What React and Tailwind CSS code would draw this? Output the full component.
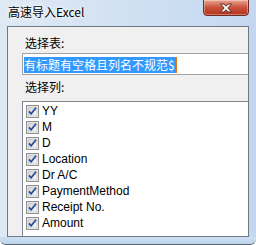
import React from 'react';

const columns = ['YY', 'M', 'D', 'Location', 'Dr A/C', 'PaymentMethod', 'Receipt No.', 'Amount'];

const CheckBox = () => (
  <svg width="13" height="13" viewBox="0 0 13 13" className="shrink-0">
    <defs>
      <linearGradient id="cbfill" x1="0" y1="0" x2="1" y2="1">
        <stop offset="0" stopColor="#d4d4d4" />
        <stop offset="1" stopColor="#f7f7f7" />
      </linearGradient>
    </defs>
    <rect x="0.5" y="0.5" width="12" height="12" fill="#f4f4f4" stroke="#8e8f8f" />
    <rect x="2" y="2" width="9" height="9" fill="url(#cbfill)" stroke="#b5b5b5" strokeWidth="0.6" />
    <path d="M3 6.3 L5.2 8.8 L10 2.8" fill="none" stroke="#2c4b9a" strokeWidth="1.8" strokeLinejoin="round" />
  </svg>
);

const CloseButton = () => (
  <div className="w-[46px] h-[17px] -mt-px rounded-b-[4px] border border-[#6e2a1f] bg-gradient-to-b from-[#e8a493] via-[#c9503b] to-[#b5321c] flex items-center justify-center shadow-[inset_0_0_0_1px_rgba(255,255,255,0.35)]">
    <svg width="14" height="10" viewBox="0 0 14 10">
      <path
        d="M1.5 1 H5 L7 3.3 L9 1 H12.5 L8.8 5 L12.5 9 H9 L7 6.7 L5 9 H1.5 L5.2 5 Z"
        fill="#ffffff"
        stroke="#5a2a22"
        strokeWidth="1"
        strokeLinejoin="round"
      />
    </svg>
  </div>
);

export default function App() {
  return (
    <div className="w-[256px] h-[245px] overflow-hidden bg-gradient-to-r from-[#dfe9f5] to-[#c3d8f0] rounded-b-[6px] border-b border-[#5a6470] flex flex-col">
      <div className="h-[26px] flex items-start justify-between pr-[7px] shrink-0">
        <span className="pl-[8px] pt-[5px] text-[12px] leading-[14px] text-black font-['Noto_Sans_CJK_SC',sans-serif] [text-shadow:0_0_6px_#ffffff,0_0_3px_#ffffff]">
          高速导入Excel
        </span>
        <CloseButton />
      </div>
      <div className="mx-[7px] h-[211px] shrink-0 border border-[#6f7884] bg-[#f0f0f0] flex flex-col overflow-hidden">
        <div className="mt-[9px] h-[14px] pl-[17px] text-[12px] leading-[14px] text-black font-['Noto_Sans_CJK_SC',sans-serif]">
          选择表:
        </div>
        <div className="mt-[3px] ml-[14px] h-[22px] shrink-0 bg-white border-t border-l border-b border-[#a3a3a3] pl-[1px] pt-[3px] flex items-start">
          <div className="h-[16px] pr-[1px] bg-[#3399ff] text-white text-[12px] leading-[16px] font-['Noto_Sans_CJK_SC',sans-serif] border-r border-[#e07b10] overflow-hidden whitespace-nowrap">
            有标题有空格且列名不规范$
          </div>
        </div>
        <div className="mt-[5px] h-[14px] pl-[17px] text-[12px] leading-[14px] text-black font-['Noto_Sans_CJK_SC',sans-serif]">
          选择列:
        </div>
        <div className="mt-[7px] ml-[14px] flex-1 bg-white border-t border-l border-[#828790] pt-[1px] pl-[3px] flex flex-col">
          {columns.map((c) => (
            <div key={c} className="h-[16px] shrink-0 flex items-center gap-[3px]">
              <CheckBox />
              <span className="text-[12px] leading-[16px] text-black font-['Liberation_Sans',Arial,sans-serif]">{c}</span>
            </div>
          ))}
        </div>
      </div>
      <div className="flex-1 bg-gradient-to-b from-[#cfe0f3] to-[#bcd3ec]" />
    </div>
  );
}
